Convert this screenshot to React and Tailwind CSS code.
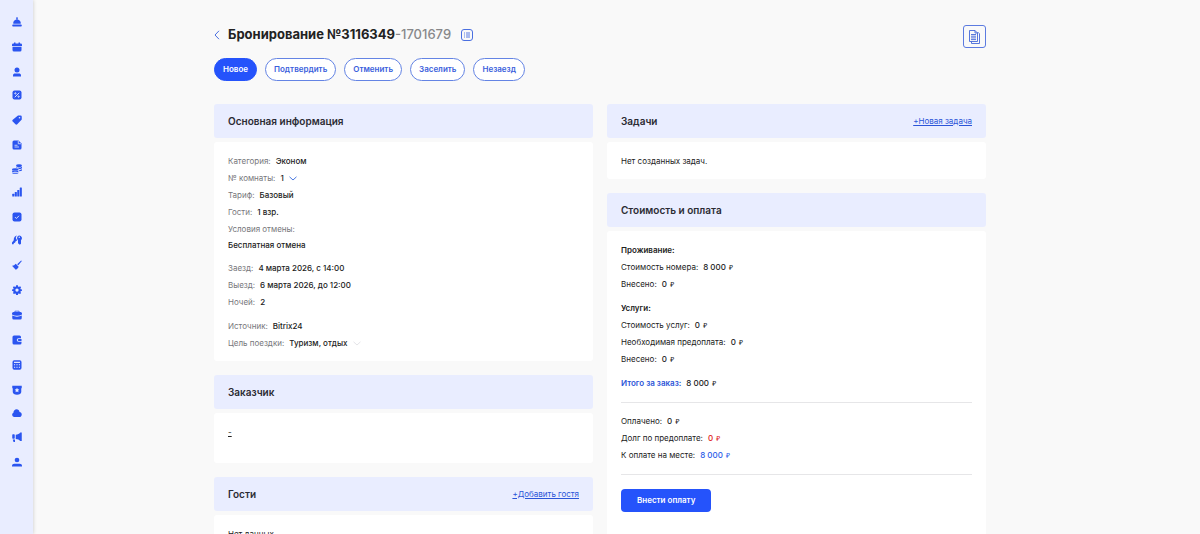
import React from 'react';

/**
 * サイドバーのアイコン（20x20 の viewBox で統一）
 */
const NAV_ITEMS = [
  {
    id: 'reception',
    label: 'Стойка',
    height: 'h-[25px]',
    icon: (
      <>
        <path d="M8 1h4v2.200h-1V5a7 7 0 0 1 6.400 8.500H2.600A7 7 0 0 1 9 5V3.200H8z" />
        <rect x="0.500" y="15" width="19" height="4" rx="1.500" />
      </>
    ),
  },
  {
    id: 'calendar',
    label: 'Календарь',
    height: 'h-[25px]',
    icon: (
      <>
        <path d="M4 1h3v2h6V1h3v2h1.500A2.500 2.500 0 0 1 20 5.500V8H0V5.500A2.500 2.500 0 0 1 2.500 3H4z" />
        <path d="M1 9.500h18V16a3 3 0 0 1-3 3H4a3 3 0 0 1-3-3z" />
      </>
    ),
  },
  {
    id: 'guests',
    label: 'Гости',
    height: 'h-[25px]',
    icon: (
      <>
        <circle cx="10" cy="6" r="5" />
        <path d="M2 19v-2.500C2 14 4 13 6 13h8c2 0 4 1 4 3.500V19z" />
      </>
    ),
  },
  {
    id: 'discounts',
    label: 'Скидки',
    height: 'h-[23px]',
    icon: (
      <>
        <rect x="1" y="1" width="18" height="18" rx="4" />
        <g className="stroke-[#e9edff]" fill="none" strokeWidth="1.800">
          <path d="M14.500 5.500l-9 9" />
          <circle cx="6.800" cy="6.800" r="1.300" />
          <circle cx="13.200" cy="13.200" r="1.300" />
        </g>
      </>
    ),
  },
  {
    id: 'rates',
    label: 'Тарифы',
    height: 'h-[25px]',
    icon: (
      <path
        fillRule="evenodd"
        d="M12 1h5A2.500 2.500 0 0 1 19.500 3.500v5.500L10.500 18.500a2.500 2.500 0 0 1-3.600 0l-5.400-5.400a2.500 2.500 0 0 1 0-3.600zM15 4a1.600 1.600 0 1 0 0 3.200A1.600 1.600 0 0 0 15 4z"
      />
    ),
  },
  {
    id: 'documents',
    label: 'Документы',
    height: 'h-[25px]',
    icon: (
      <>
        <path d="M4 1h9l6 6v9a3 3 0 0 1-3 3H4a3 3 0 0 1-3-3V4a3 3 0 0 1 3-3z" />
        <g className="stroke-[#e9edff]" fill="none" strokeWidth="1.600">
          <path d="M12.500 2v5.500H18M5 10.500h6M5 14h9" />
        </g>
      </>
    ),
  },
  {
    id: 'money',
    label: 'Финансы',
    height: 'h-[24px]',
    icon: (
      <>
        <ellipse cx="14" cy="3.500" rx="6" ry="2.800" />
        <path d="M8 5.500c3 2.500 9 2.500 12 0v2.800c-2 1.500-4 1.900-6.500 1.700C12.500 8 10 7.300 8 7.200zM14.500 12c2 0 4-.500 5.500-1.500v2.300c-1.300 1-3 1.500-5.500 1.600z" />
        <ellipse cx="6.500" cy="11" rx="6.500" ry="2.500" />
        <path d="M0 13c3 2 10 2 13 0v2c-3 2.300-10 2.300-13 0zM0 16.800c3 2 10 2 13 0v1c-3 2.700-10 2.700-13 0z" />
      </>
    ),
  },
  {
    id: 'reports',
    label: 'Отчёты',
    height: 'h-[23px]',
    icon: (
      <>
        <rect x="0.500" y="13.500" width="4.200" height="5.500" rx="1" />
        <rect x="5.500" y="10" width="4.200" height="9" rx="1" />
        <rect x="10.500" y="6" width="4.200" height="13" rx="1" />
        <rect x="15.500" y="1" width="4.200" height="18" rx="1" />
      </>
    ),
  },
  {
    id: 'tasks',
    label: 'Задачи',
    height: 'h-[25px]',
    icon: (
      <>
        <rect x="1" y="1" width="18" height="18" rx="4" />
        <path className="stroke-[#e9edff]" fill="none" strokeWidth="1.800" d="M6 10.200l2.800 2.800L14 7.500" />
      </>
    ),
  },
  {
    id: 'keys',
    label: 'Ключи',
    height: 'h-[23px]',
    icon: (
      <>
        <path
          fillRule="evenodd"
          d="M14.500 1a5.300 5.300 0 0 1 3.500 9.300v7L15.500 19.500l-3.500-3v-6.200A5.300 5.300 0 0 1 14.500 1zm0 2.200a1.400 1.400 0 1 0 0 2.800 1.400 1.400 0 0 0 0-2.800z"
        />
        <path d="M10 1a6.500 6.500 0 0 0 .500 9.500L7 13l-1 2.500-2 .500-1 2.500H0V15l3.500-4.500C3 5.500 6 1.500 10 1z" />
      </>
    ),
  },
  {
    id: 'cleaning',
    label: 'Уборка',
    height: 'h-[25px]',
    icon: (
      <>
        <path d="M18.300.800l1.400 1.400-7 8.500-2.400-2.400z" />
        <path d="M7.500 7.500l5.800 5.800c-1 2.800-3 4.700-5.800 6L0 11.500c3.500.200 5-1.500 7.500-4z" />
      </>
    ),
  },
  {
    id: 'settings',
    label: 'Настройки',
    height: 'h-[25px]',
    icon: (
      <path
        fillRule="evenodd"
        d="M8.200 0.500h3.600l.5 2.600 1.500.7 2.300-1.500 2.100 2.300-1.400 2.200.6 1.500 2.600.500v2.900l-2.600.600-.6 1.500 1.400 2.200-2.100 2.200-2.300-1.400-1.500.600-.5 2.600H8.200l-.5-2.600-1.500-.6-2.300 1.400-2.100-2.200 1.400-2.200-.6-1.500L0 11.700V8.800l2.600-.500.6-1.500L1.800 4.600l2.100-2.300 2.300 1.500 1.500-.7zM10 6.800a3.300 3.300 0 1 0 0 6.600 3.300 3.300 0 0 0 0-6.600z"
      />
    ),
  },
  {
    id: 'portfolio',
    label: 'Портфель',
    height: 'h-[25px]',
    icon: (
      <>
        <path
          fillRule="evenodd"
          d="M6 1.500h8L15.500 4H17a3 3 0 0 1 3 3v2c-6 3.500-14 3.500-20 0V7a3 3 0 0 1 3-3h1.500zM7 3l-.700 1h7.400L13 3z"
        />
        <path d="M0.500 11c6 3 13 3 19 0v5a3 3 0 0 1-3 3h-13a3 3 0 0 1-3-3z" />
      </>
    ),
  },
  {
    id: 'wallet',
    label: 'Кошелёк',
    height: 'h-[25px]',
    icon: (
      <>
        <path d="M4 1h11a3 3 0 0 1 3 3v2.500h-5a3.500 3.500 0 0 0 0 7h6V16a3 3 0 0 1-3 3H4a3 3 0 0 1-3-3V4a3 3 0 0 1 3-3z" />
        <rect x="11.500" y="8" width="8" height="4" rx="2" />
      </>
    ),
  },
  {
    id: 'cashbox',
    label: 'Касса',
    height: 'h-[25px]',
    icon: (
      <>
        <rect x="1" y="0.500" width="18" height="19" rx="3.500" />
        <g className="fill-[#e9edff]">
          <rect x="4" y="3.500" width="12" height="2.400" />
          <rect x="4" y="8.500" width="2.400" height="2" />
          <rect x="8.800" y="8.500" width="2.400" height="2" />
          <rect x="13.600" y="8.500" width="2.400" height="2" />
          <rect x="4" y="13.500" width="2.400" height="2" />
          <rect x="8.800" y="13.500" width="2.400" height="2" />
          <rect x="13.600" y="13.500" width="2.400" height="2" />
        </g>
      </>
    ),
  },
  {
    id: 'loyalty',
    label: 'Лояльность',
    height: 'h-[25px]',
    icon: (
      <>
        <path d="M0.500 1.500c3 .500 5 0 9.500 0s6.500.500 9.500 0v5H18.500V14c0 3-3.500 5.500-8.500 5.500S1.500 17 1.500 14V6.500h-1z" />
        <path className="fill-[#e9edff]" d="M10 5.500l1.500 2.900 3.200.500-2.300 2.300.5 3.200L10 12.900l-2.900 1.500.5-3.200-2.300-2.300 3.200-.5z" />
      </>
    ),
  },
  {
    id: 'cloud',
    label: 'Облако',
    height: 'h-[23px]',
    icon: <path d="M4.500 18a4.500 4.500 0 0 1-1.700-8.500C3 5 6 2.500 9 2.500c3.500 0 5.500 2 6 5.300 2.500.200 4.500 2.200 4.500 5S17.500 18 15 18z" />,
  },
  {
    id: 'marketing',
    label: 'Реклама',
    height: 'h-[24px]',
    icon: (
      <>
        <path d="M7.500 5.500c4 0 7-2 9-4.500h3v17h-3c-2-2.500-5-4-9-4z" />
        <rect x="0.500" y="4.500" width="5" height="9" rx="1.500" />
        <path d="M1.500 15h4.500v5H3z" />
      </>
    ),
  },
  {
    id: 'profile',
    label: 'Профиль',
    height: 'h-[25px]',
    icon: (
      <>
        <circle cx="10" cy="6" r="4.700" />
        <path d="M0 19v-1.500C0 15 2 13.500 4.500 13.500h11c2.500 0 4.500 1.500 4.500 4V19z" />
      </>
    ),
  },
];

const STATUSES = ['Новое', 'Подтвердить', 'Отменить', 'Заселить', 'Незаезд'];

/**
 * 左側のナビゲーション
 */
const Sidebar = () => (
  <nav className="flex w-[33px] shrink-0 flex-col items-center bg-[#e9edff] pt-[2px] shadow-[0_0_4px_rgba(0,0,0,0.2)]">
    {NAV_ITEMS.map(({ id, label, icon, height }) => (
      <a
        key={id}
        href={`#${id}`}
        aria-label={label}
        className={`flex shrink-0 items-end text-[#2b55f0] ${height}`}
      >
        <svg className="size-[10px]" viewBox="0 0 20 20" fill="currentColor">
          {icon}
        </svg>
      </a>
    ))}
  </nav>
);

/**
 * 見出しと本文を持つカード
 */
const Section = ({ title, action, className = '', children }) => (
  <section className={`flex flex-col gap-1 ${className}`}>
    <header className="flex h-[34px] shrink-0 items-center justify-between rounded-[3px] bg-[#e9edff] px-[14px]">
      <h2 className="text-[10px] font-semibold text-[#2b2b33]">{title}</h2>
      {action && (
        <a href="#new" className="text-[8px] text-[#2b55d8] underline">
          {action}
        </a>
      )}
    </header>
    <div className="grow rounded-[3px] bg-white px-[14px] pt-[11px] pb-[9px]">{children}</div>
  </section>
);

const Row = ({ label, children }) => (
  <div className="flex items-center gap-[5px]">
    <span className="text-[#77777b]">{label}</span>
    <span className="font-medium">{children}</span>
  </div>
);

const Chevron = ({ className }) => (
  <svg className={`h-[5px] w-[8px] ${className}`} viewBox="0 0 8 5" fill="none" stroke="currentColor">
    <path d="M0.500 0.800L4 4 7.500 0.800" />
  </svg>
);

const SelectRow = ({ id, label, value, arrow }) => (
  <div className="flex items-center gap-[5px]">
    <label htmlFor={id} className="text-[#77777b]">
      {label}
    </label>
    <select id={id} defaultValue={value} className="appearance-none bg-transparent font-medium">
      <option>{value}</option>
    </select>
    <Chevron className={arrow} />
  </div>
);

/**
 * 金額の行（ルーブル記号は小さく表示）
 */
const Price = ({ label, value, labelClass = '', valueClass = '' }) => (
  <div className="flex items-center gap-[5px]">
    <span className={labelClass}>{label}</span>
    <span className={`flex items-center gap-[3px] font-medium ${valueClass}`}>
      {value}
      <span className="text-[6px]">₽</span>
    </span>
  </div>
);

const PageHeader = () => (
  <div className="flex items-start justify-between">
    <div className="flex h-[19px] items-center">
      <a href="#back" aria-label="Назад" className="w-[14px] text-[#4a6fe0]">
        <svg className="h-[10px] w-[6px]" viewBox="0 0 6 10" fill="none" stroke="currentColor">
          <path d="M5 0.800L1 5l4 4.200" />
        </svg>
      </a>
      <h1 className="text-[13px] font-bold text-[#222]">
        Бронирование №3116349<span className="font-medium text-[#88888a]">-1701679</span>
      </h1>
      <button type="button" aria-label="История" className="ml-[10px] text-[#4a6fe0]">
        <svg className="size-[12px]" viewBox="0 0 12 12" fill="none" stroke="currentColor">
          <rect x="0.500" y="0.500" width="11" height="11" rx="2.500" />
          <path d="M3 4h1M5 4h4M3 6h1M5 6h4M3 8h1M5 8h4" strokeWidth="0.900" />
        </svg>
      </button>
    </div>
    <button
      type="button"
      aria-label="Документы"
      className="flex size-[23px] items-center justify-center rounded-[3px] border border-[#5c7be0] text-[#4468d8]"
    >
      <svg className="h-[14px] w-[11px]" viewBox="0 0 11 14" fill="none" stroke="currentColor" strokeWidth="0.900">
        <path d="M0.500 0.500h5.500L8.500 3v8.500h-8zM6 0.500V3h2.500" />
        <path d="M8.500 2.500h.8l1.200 1.300v9.700h-8v-2" />
        <path d="M2 4.500h5M2 6.200h5M2 7.900h5M2 9.600h5" />
      </svg>
    </button>
  </div>
);

export default function App() {
  return (
    <div className="flex h-screen overflow-hidden bg-[#f9f9f9] font-['Inter','Noto_Sans',sans-serif] text-[8px] leading-[17px] text-[#222]">
      <Sidebar />
      <main className="flex grow flex-col overflow-y-auto pr-[33px] [scrollbar-width:none]">
        <div className="mx-auto flex w-full max-w-[772px] grow flex-col pt-[25px]">
          <PageHeader />

          {/* ステータスボタン */}
          <div className="mt-[10px] flex gap-2">
            {STATUSES.map((status, index) => (
              <button
                key={status}
                type="button"
                className={`h-[23px] rounded-full border px-[8px] font-semibold ${
                  index === 0
                    ? 'border-[#2553fb] bg-[#2553fb] text-white'
                    : 'border-[#6484e4] bg-white text-[#3a60dc]'
                }`}
              >
                {status}
              </button>
            ))}
          </div>

          <div className="mt-[23px] grid grow grid-cols-2 gap-[14px]">
            <div className="flex flex-col gap-[14px]">
              <Section title="Основная информация">
                <Row label="Категория:">Эконом</Row>
                <SelectRow id="room" label="№ комнаты:" value="1" arrow="text-[#4a78e0]" />
                <Row label="Тариф:">Базовый</Row>
                <Row label="Гости:">1 взр.</Row>
                <div className="text-[#77777b]">Условия отмены:</div>
                <div className="leading-[15px] font-medium">Бесплатная отмена</div>
                <div className="mt-[7px]">
                  <Row label="Заезд:">4 марта 2026, с 14:00</Row>
                  <Row label="Выезд:">6 марта 2026, до 12:00</Row>
                  <Row label="Ночей:">2</Row>
                </div>
                <div className="mt-[7px]">
                  <Row label="Источник:">Bitrix24</Row>
                  <SelectRow id="purpose" label="Цель поездки:" value="Туризм, отдых" arrow="text-[#e4e4e8]" />
                </div>
              </Section>

              <Section title="Заказчик">
                <div className="h-[30px]">
                  <a href="#customer" className="underline">
                    -
                  </a>
                </div>
              </Section>

              <Section title="Гости" action="+Добавить гостя" className="grow">
                Нет данных
              </Section>
            </div>

            <div className="flex flex-col gap-[14px]">
              <Section title="Задачи" action="+Новая задача">
                Нет созданных задач.
              </Section>

              <Section title="Стоимость и оплата" className="grow">
                <div className="flex flex-col gap-[7px]">
                  <div>
                    <h3 className="font-semibold">Проживание:</h3>
                    <Price label="Стоимость номера:" value="8 000" />
                    <Price label="Внесено:" value="0" />
                  </div>
                  <div>
                    <h3 className="font-semibold">Услуги:</h3>
                    <Price label="Стоимость услуг:" value="0" />
                    <Price label="Необходимая предоплата:" value="0" />
                    <Price label="Внесено:" value="0" />
                  </div>
                  <Price label="Итого за заказ:" value="8 000" labelClass="font-semibold text-[#2b55d8]" />
                </div>
                <div className="my-[10px] border-y border-[#e6e6e8] py-[10px]">
                  <Price label="Оплачено:" value="0" />
                  <Price label="Долг по предоплате:" value="0" valueClass="text-[#e02020]" />
                  <Price label="К оплате на месте:" value="8 000" valueClass="text-[#2b5ce8]" />
                </div>
                <button
                  type="button"
                  className="mt-1 h-[23px] rounded-[4px] bg-[#2553fb] px-4 font-semibold text-white"
                >
                  Внести оплату
                </button>
              </Section>
            </div>
          </div>
        </div>
      </main>
    </div>
  );
}
